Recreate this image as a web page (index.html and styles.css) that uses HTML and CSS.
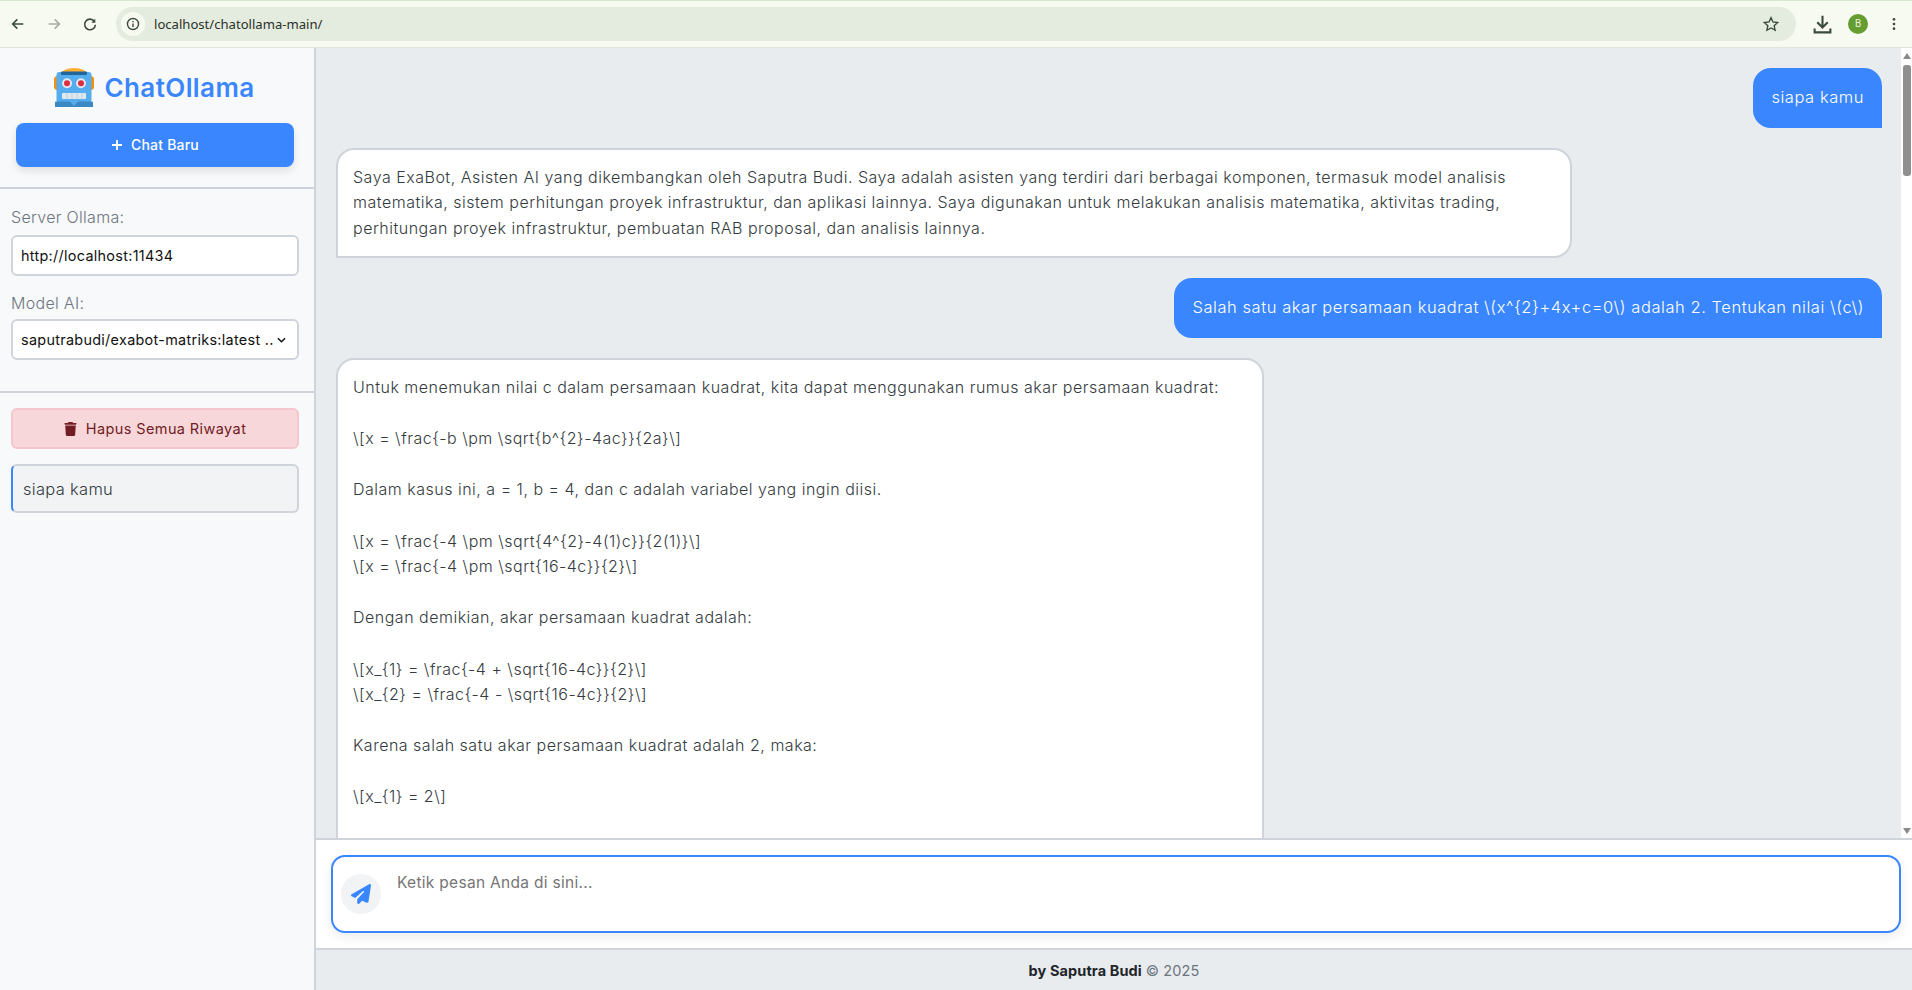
FILE: index.html
```html
<!DOCTYPE html>
<html lang="id">
<head>
<meta charset="utf-8">
<title>ChatOllama</title>
<link rel="stylesheet" href="styles.css">
</head>
<body>
<header class="browser">
  <div class="nav-icons">
    <svg class="ico" viewBox="0 0 24 24"><path d="M20 12H5M11 5l-7 7 7 7" class="st"/></svg>
    <svg class="ico dim" viewBox="0 0 24 24"><path d="M4 12h15M13 5l7 7-7 7" class="st"/></svg>
    <svg class="ico" viewBox="0 0 24 24"><path d="M18.5 8A8 8 0 1 0 20 13" class="st"/><path d="M20 4v6h-6z" class="fl"/></svg>
  </div>
  <div class="omni">
    <span class="info"><svg viewBox="0 0 24 24" class="info-ico"><circle cx="12" cy="12" r="9.5" class="st"/><path d="M12 11v6M12 7v2" class="st"/></svg></span>
    <span class="url">localhost/chatollama-main/</span>
    <svg class="star" viewBox="0 0 24 24"><path d="M12 3.5l2.6 5.8 6.3.7-4.7 4.2 1.3 6.2L12 17.3l-5.5 3.1 1.3-6.2L3.1 10l6.3-.7z" class="st thin"/></svg>
  </div>
  <div class="tool-icons">
    <svg class="ico" viewBox="0 0 24 24"><path d="M12 2v13M6 9.500l6 6 6-6M3 16.500V21h18v-4.500" class="st"/></svg>
    <span class="avatar">B</span>
    <svg class="dots" viewBox="0 0 6 24"><circle cx="3" cy="5" r="2"/><circle cx="3" cy="12" r="2"/><circle cx="3" cy="19" r="2"/></svg>
  </div>
</header>
<div class="app">
  <aside class="sidebar">
    <div class="brand-block">
      <div class="brand">
        <svg class="robot" viewBox="0 0 40 40">
          <path d="M5 9C6 3 13 0 20 0s14 3 15 9z" fill="#ffac33"/>
          <rect x="0" y="8" width="7" height="14" rx="3.5" fill="#f4900c"/>
          <rect x="33" y="8" width="7" height="14" rx="3.5" fill="#f4900c"/>
          <rect x="2.500" y="4" width="35" height="31" rx="3" fill="#55acee"/>
          <rect x="7" y="3.500" width="26" height="3.500" rx="1" fill="#226699"/>
          <circle cx="13" cy="15.300" r="5" fill="#e1e8ed"/><circle cx="27" cy="15.300" r="5" fill="#e1e8ed"/>
          <circle cx="13" cy="15.300" r="3" fill="#dd2e44"/><circle cx="27" cy="15.300" r="3" fill="#dd2e44"/>
          <rect x="8" y="25" width="24" height="6" rx="1" fill="#e1e8ed"/>
          <path d="M13 25v6M18 25v6M23 25v6M28 25v6" stroke="#a9c4d6" stroke-width=".7"/>
          <path d="M1 34.500a1 1 0 0 1 1-1h36a1 1 0 0 1 1 1V39H1z" fill="#3b88c3"/>
          <path d="M15.500 33h9l-4.500 5z" fill="#55acee"/>
        </svg>
        <h1 class="brand-name">ChatOllama</h1>
      </div>
      <button class="new-chat"><svg class="plus" viewBox="0 0 12 12"><path d="M6 1v10M1 6h10"/></svg>Chat Baru</button>
    </div>
    <div class="settings">
      <label class="field-label" for="srv">Server Ollama:</label>
      <input id="srv" class="field" value="http://localhost:11434">
      <label class="field-label second" for="mdl">Model AI:</label>
      <div class="pick-wrap">
        <select id="mdl" class="field pick"><option>saputrabudi/exabot-matriks:latest ..</option></select>
        <svg class="chevron" viewBox="0 0 10 6"><path d="M1 1l4 4 4-4"/></svg>
      </div>
    </div>
    <div class="history">
      <button class="clear"><svg class="trash" viewBox="0 0 448 512"><path d="M135.2 17.7L128 32H32C14.3 32 0 46.3 0 64S14.3 96 32 96H416c17.7 0 32-14.3 32-32s-14.3-32-32-32H320l-7.2-14.3C307.4 6.8 296.3 0 284.2 0H163.8c-12.1 0-23.2 6.8-28.6 17.7zM416 128H32L53.2 467c1.600 25.3 22.6 45 47.9 45H346.900c25.3 0 46.3-19.7 47.9-45L416 128z"/></svg>Hapus Semua Riwayat</button>
      <div class="history-item">siapa kamu</div>
    </div>
  </aside>
  <main class="main">
    <div class="chat-row">
      <section class="messages">
        <div class="msg user">siapa kamu</div>
        <div class="msg bot w1">Saya ExaBot, Asisten AI yang dikembangkan oleh Saputra Budi. Saya adalah asisten yang terdiri dari berbagai komponen, termasuk model analisis
matematika, sistem perhitungan proyek infrastruktur, dan aplikasi lainnya. Saya digunakan untuk melakukan analisis matematika, aktivitas trading,
perhitungan proyek infrastruktur, pembuatan RAB proposal, dan analisis lainnya.</div>
        <div class="msg user">Salah satu akar persamaan kuadrat \(x^{2}+4x+c=0\) adalah 2. Tentukan nilai \(c\)</div>
        <div class="msg bot w2">Untuk menemukan nilai c dalam persamaan kuadrat, kita dapat menggunakan rumus akar persamaan kuadrat:

\[x = \frac{-b \pm \sqrt{b^{2}-4ac}}{2a}\]

Dalam kasus ini, a = 1, b = 4, dan c adalah variabel yang ingin diisi.

\[x = \frac{-4 \pm \sqrt{4^{2}-4(1)c}}{2(1)}\]
\[x = \frac{-4 \pm \sqrt{16-4c}}{2}\]

Dengan demikian, akar persamaan kuadrat adalah:

\[x_{1} = \frac{-4 + \sqrt{16-4c}}{2}\]
\[x_{2} = \frac{-4 - \sqrt{16-4c}}{2}\]

Karena salah satu akar persamaan kuadrat adalah 2, maka:

\[x_{1} = 2\]</div>
      </section>
      <div class="scrollbar">
        <span class="arrow up"></span>
        <span class="thumb"></span>
        <span class="track"></span>
        <span class="arrow down"></span>
      </div>
    </div>
    <div class="composer">
      <div class="composer-box">
        <button class="send"><svg viewBox="0 0 512 512"><path d="M498.1 5.6c10.1 7 15.4 19.1 13.5 31.2l-64 416c-1.500 9.7-7.4 18.2-16 23s-18.9 5.400-28 1.600L284 427.7l-68.500 74.100c-8.900 9.700-22.900 12.900-35.200 8.100S160 493.200 160 480V396.400c0-4 1.500-7.800 4.200-10.700L331.800 202.800c5.800-6.300 5.600-16-.4-22s-15.700-6.400-22-.7L106 360.800 17.700 316.600C7.100 311.300 .3 300.700 0 288.900s5.900-22.800 16.100-28.700l448-256c10.700-6.100 23.900-5.500 34 1.400z"/></svg></button>
        <textarea class="prompt" placeholder="Ketik pesan Anda di sini..."></textarea>
      </div>
    </div>
    <footer class="footer"><strong>by Saputra Budi</strong> © 2025</footer>
  </main>
</div>
</body>
</html>
```

FILE: styles.css
```css
* { box-sizing: border-box; }
html, body { height: 100%; }
body {
  margin: 0;
  height: 990px;
  overflow: hidden;
  display: flex;
  flex-direction: column;
  font-family: Inter, "Liberation Sans", sans-serif;
  color: #343a40;
  background: #e9ecef;
}

/* browser chrome */
.browser {
  height: 48px;
  flex: none;
  display: flex;
  align-items: center;
  background: #f7faf0;
  border-top: 1px solid #d6e8d0;
  border-bottom: 1px solid #e2e4de;
  padding: 0 12px 0 8px;
}
.nav-icons { display: flex; gap: 20px; width: 108px; padding-left: 2px; align-items: center; }
.ico { width: 16px; height: 16px; flex: none; }
.st { fill: none; stroke: #3c4a3c; stroke-width: 2.4; }
.st.thin { stroke-width: 1.8; }
.fl { fill: #3c4a3c; }
.dim .st { stroke: #a6aca4; }
.omni {
  width: 1680px;
  height: 34px;
  border-radius: 17px;
  background: #e4ebdf;
  display: flex;
  align-items: center;
  padding: 0 16px 0 5px;
}
.info {
  width: 24px; height: 24px; border-radius: 50%;
  background: #f7faf0;
  display: flex; align-items: center; justify-content: center;
}
.info-ico { width: 14px; height: 14px; }
.url {
  margin-left: 9px;
  flex: 1;
  font: 13.1px "Noto Sans", Roboto, sans-serif;
  color: #2a322a;
}
.star { width: 18px; height: 18px; }
.tool-icons { display: flex; align-items: center; margin-left: 16px; }
.tool-icons .ico { width: 21px; height: 21px; }
.avatar {
  width: 20px; height: 20px; border-radius: 50%;
  margin-left: 15px;
  background: #659d31;
  color: #e8f2dc;
  font: 10px/20px Roboto, sans-serif;
  text-align: center;
}
.dots { width: 6px; height: 16px; margin-left: 23px; fill: #3c4a3c; }

/* layout */
.app { flex: 1; min-height: 0; display: flex; }
.sidebar {
  width: 316px;
  flex: none;
  background: #f8f9fa;
  border-right: 2px solid #ced4da;
  display: flex;
  flex-direction: column;
}
.brand-block {
  height: 141px;
  padding: 20px 20px 0 16px;
  border-bottom: 2px solid #ced4da;
}
.brand { display: flex; align-items: center; justify-content: center; gap: 10px; height: 39px; padding-right: 1px; }
.robot { width: 40px; height: 40px; flex: none; }
.brand-name { margin: 0; font-size: 26px; font-weight: 600; letter-spacing: 0.4px; color: #3a86ff; }
.new-chat {
  display: flex; align-items: center; justify-content: center; gap: 8px;
  width: 278px; height: 44px;
  margin-top: 16px;
  padding-bottom: 2px;
  border: 0; border-radius: 8px;
  background: #3a86ff;
  color: #fff;
  font: 500 14px Inter, sans-serif;
  letter-spacing: .2px;
  box-shadow: 0 4px 8px rgba(0,0,0,.1);
}
.plus { width: 12px; height: 12px; fill: none; stroke: #fff; stroke-width: 1.800; }
.settings {
  height: 204px;
  padding: 16px 13px 0 11px;
  border-bottom: 2px solid #ced4da;
  display: flex;
  flex-direction: column;
}
.field-label { font-size: 16px; font-weight: 300; letter-spacing: .3px; line-height: 24px; color: #6c757d; margin-bottom: 6px; }
.field-label.second { margin-top: 15px; margin-bottom: 4px; }
.field {
  width: 288px; height: 41px;
  border: 2px solid #ced4da;
  border-radius: 6px;
  background: #fff;
  padding: 0 8px;
  font: 400 14.4px Inter, sans-serif;
  letter-spacing: .3px;
  color: #111;
  flex: none;
}
.pick-wrap { position: relative; width: 288px; }
.pick { appearance: none; display: block; padding-left: 8px; }
.chevron {
  position: absolute;
  right: 13px;
  top: 18px;
  width: 9px;
  height: 6px;
  fill: none;
  stroke: #111;
  stroke-width: 1.6;
}
.history { padding: 15px 13px 0 11px; }
.clear {
  display: flex; align-items: center; justify-content: center; gap: 9px;
  width: 288px; height: 41px;
  border: 2px solid #f5c6cb;
  border-radius: 6px;
  background: #f8d7da;
  color: #721c24;
  font: 400 14.5px Inter, sans-serif;
  letter-spacing: .4px;
}
.trash { width: 13px; height: 14px; fill: #721c24; }
.history-item {
  margin-top: 15px;
  width: 288px; height: 49px;
  display: flex; align-items: center;
  padding-left: 10px;
  border: 2px solid #ced4da;
  border-left: 2px solid #3a86ff;
  border-radius: 6px;
  background: #f1f3f5;
  font-size: 16.5px;
  letter-spacing: .3px;
  font-weight: 300;
  color: #343a40;
}

/* chat */
.main { flex: 1; min-width: 0; display: flex; flex-direction: column; }
.chat-row { height: 790px; flex: none; display: flex; }
.messages {
  flex: 1;
  min-width: 0;
  overflow: hidden;
  padding: 20px 19px 0 20px;
  display: flex;
  flex-direction: column;
  gap: 20px;
}
.msg {
  flex: none;
  font-size: 16px;
  font-weight: 300;
  letter-spacing: .5px;
  line-height: 25.6px;
  white-space: pre;
}
.user {
  align-self: flex-end;
  background: #3a86ff;
  color: #fff;
  font-size: 16.5px;
  letter-spacing: .55px;
  padding: 17px 18px;
  border-radius: 18px 18px 0 18px;
}
.bot {
  align-self: flex-start;
  background: #fff;
  border: 2px solid #ced4da;
  border-radius: 18px 18px 18px 0;
  padding: 15px;
}
.w1 { width: 1236px; }
.w2 { width: 928px; height: 620px; }
.scrollbar {
  width: 11px;
  flex: none;
  background: #fff;
  display: flex;
  flex-direction: column;
  align-items: center;
  padding: 5px 0 4px;
}
.arrow { width: 0; height: 0; border-left: 4px solid transparent; border-right: 4px solid transparent; flex: none; }
.arrow.up { border-bottom: 6px solid #8a8a8a; }
.arrow.down { border-top: 6px solid #8a8a8a; }
.thumb { width: 8px; height: 111px; margin-top: 6px; border-radius: 3px; background: #8f8f8f; flex: none; }
.track { flex: 1; }
.composer {
  height: 112px;
  flex: none;
  background: #fff;
  border-top: 2px solid #ced4da;
  border-bottom: 2px solid #ced4da;
  padding: 15px 11px 15px 15px;
}
.composer-box {
  height: 78px;
  display: flex;
  gap: 16px;
  padding: 17px 8px 0 8px;
  background: #fff;
  border: 2px solid #3a86ff;
  border-radius: 14px;
  box-shadow: 0 4px 12px rgba(0,0,0,.08);
}
.send {
  width: 40px; height: 40px; border: 0; border-radius: 50%;
  background: #f1f3f5;
  padding: 10px;
  flex: none;
}
.send svg { display: block; fill: #3a86ff; }
.prompt {
  flex: 1;
  height: 48px;
  margin-top: -3px;
  border: 0;
  outline: 0;
  resize: none;
  padding: 0;
  font: 400 15.5px/24px Inter, sans-serif;
  letter-spacing: .3px;
  color: #333;
  overflow: hidden;
}
.prompt::placeholder { color: #757575; opacity: 1; }
.footer {
  flex: 1;
  display: flex;
  align-items: center;
  justify-content: center;
  gap: 4px;
  font-size: 14.5px;
  letter-spacing: .1px;
  color: #6c757d;
}
.footer strong { font-weight: 700; color: #212529; }
```
